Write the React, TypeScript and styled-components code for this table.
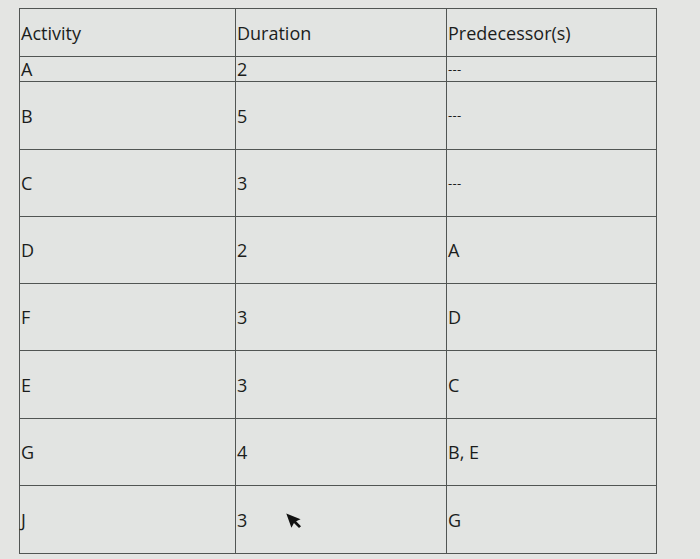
import React from "react";
import styled, { createGlobalStyle } from "styled-components";

const GlobalStyle = createGlobalStyle`
  html, body {
    margin: 0;
    padding: 0;
    background: #e4e5e3;
  }
  body {
    font-family: "Open Sans", "Noto Sans", sans-serif;
    color: #1b1d1c;
  }
`;

const rows = [
  { activity: "A", duration: "2", pred: "---", height: 25 },
  { activity: "B", duration: "5", pred: "---", height: 68 },
  { activity: "C", duration: "3", pred: "---", height: 67 },
  { activity: "D", duration: "2", pred: "A", height: 67 },
  { activity: "F", duration: "3", pred: "D", height: 67 },
  { activity: "E", duration: "3", pred: "C", height: 68 },
  { activity: "G", duration: "4", pred: "B, E", height: 67 },
  { activity: "J", duration: "3", pred: "G", height: 68 },
];

const App = () => {
  return (
    <Page>
      <GlobalStyle />
      <Sheet>
        <colgroup>
          <col style={{ width: 216 }} />
          <col style={{ width: 211 }} />
          <col style={{ width: 210 }} />
        </colgroup>
        <thead>
          <Row $height={48}>
            <HeadCell>Activity</HeadCell>
            <HeadCell>Duration</HeadCell>
            <HeadCell>Predecessor(s)</HeadCell>
          </Row>
        </thead>
        <tbody>
          {rows.map((row) => (
            <Row $height={row.height} key={row.activity}>
              <Cell>{row.activity}</Cell>
              <Cell>{row.duration}</Cell>
              <Cell $small={row.pred === "---"}>{row.pred}</Cell>
            </Row>
          ))}
        </tbody>
      </Sheet>
      <Pointer viewBox="0 0 14 20" aria-hidden>
        <path d="M1 1 L1 16 L5 12.5 L8 19 L10.5 18 L7.6 11.6 L12.5 11.2 Z" fill="#111" />
      </Pointer>
    </Page>
  );
};

const Page = styled.div`
  position: relative;
  width: 700px;
  height: 559px;
  padding: 8px 0 0 19px;
  box-sizing: border-box;
  overflow: hidden;
`;

const Sheet = styled.table`
  width: 637px;
  border-collapse: collapse;
  table-layout: fixed;
  background: #e2e4e2;
`;

const Row = styled.tr<{ $height: number }>`
  height: ${(p) => p.$height}px;
`;

const HeadCell = styled.th`
  border: 1.5px solid #515553;
  padding: 0 1px;
  text-align: left;
  vertical-align: middle;
  font-weight: 400;
  font-size: 18px;
  line-height: 1;
`;

const Cell = styled.td<{ $small?: boolean }>`
  border: 1.5px solid #515553;
  padding: 0 1px;
  text-align: left;
  vertical-align: middle;
  font-size: ${(p) => (p.$small ? "13px" : "18px")};
  letter-spacing: ${(p) => (p.$small ? "0.3px" : "0")};
  line-height: 1;
`;

const Pointer = styled.svg`
  position: absolute;
  left: 288px;
  top: 510px;
  width: 14px;
  height: 20px;
  transform: rotate(-20deg);
`;

export default App;
